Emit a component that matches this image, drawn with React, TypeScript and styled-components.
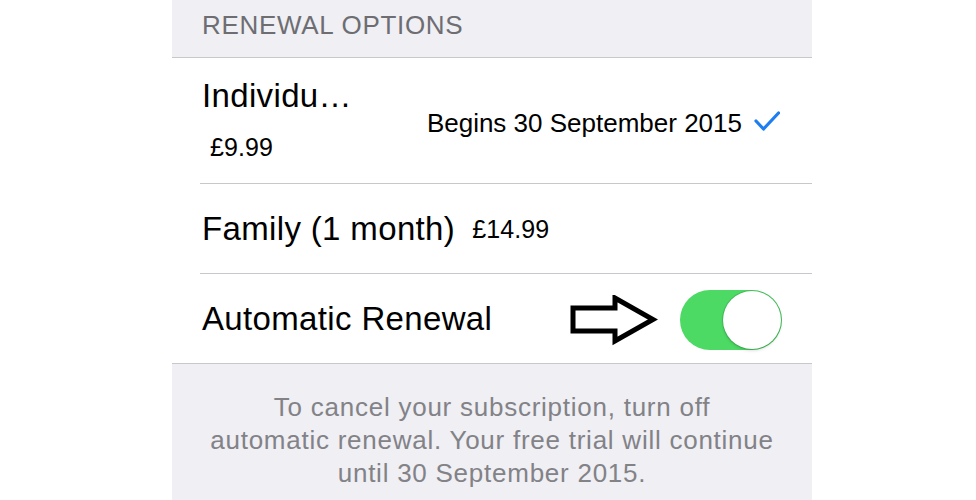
import styled, { createGlobalStyle } from 'styled-components'

const GlobalStyle = createGlobalStyle`
  html, body {
    margin: 0;
    padding: 0;
    background: #ffffff;
  }
  body {
    font-family: 'Liberation Sans', Arial, sans-serif;
    -webkit-font-smoothing: antialiased;
  }
`

const Page = styled.main`
  width: 976px;
  height: 500px;
  overflow: hidden;
  background: #ffffff;
  padding-left: 172px;
  box-sizing: border-box;
`

const Panel = styled.section`
  width: 640px;
  display: flex;
  flex-direction: column;
  background: #ffffff;
`

const Header = styled.div`
  background: #efeff4;
  border-bottom: 1px solid #c8c7cc;
  padding: 10px 0 0 30px;
  height: 47px;
  font-size: 26px;
  line-height: 30px;
  color: #6d6d72;
  letter-spacing: 0.7px;
`

const Row = styled.div<{ $height: number; $last?: boolean }>`
  margin-left: 28px;
  padding: 0 30px 0 2px;
  height: ${(p) => p.$height}px;
  display: flex;
  align-items: center;
  border-bottom: ${(p) => (p.$last ? 'none' : '1px solid #c8c7cc')};
  color: #000000;
`

const Stack = styled.div`
  display: flex;
  flex-direction: column;
  align-self: flex-start;
  padding-top: 19px;
`

const Label = styled.span`
  font-size: 33px;
  line-height: 38px;
  letter-spacing: 0.35px;
  white-space: nowrap;
`

const Price = styled.span<{ $gap?: number }>`
  font-size: 25px;
  line-height: 30px;
  letter-spacing: 0.1px;
  margin-left: ${(p) => p.$gap ?? 0}px;
`

const SubPrice = styled(Price)`
  margin-top: 17px;
  padding-left: 8px;
`

const Spacer = styled.div`
  flex: 1;
`

const Detail = styled.span`
  font-size: 26px;
  line-height: 30px;
  margin-top: 4px;
  white-space: nowrap;
`

const Check = styled.svg`
  margin-left: 12px;
  margin-right: 2px;
  margin-top: 2px;
`

const Arrow = styled.svg`
  margin-right: 22px;
  margin-top: 4px;
`

const Toggle = styled.div<{ $on: boolean }>`
  width: 102px;
  height: 60px;
  border-radius: 30px;
  background: ${(p) => (p.$on ? '#4cd964' : '#e5e5ea')};
  position: relative;
  flex-shrink: 0;
  margin-top: 2px;
`

const Knob = styled.div<{ $on: boolean }>`
  position: absolute;
  top: 1px;
  left: ${(p) => (p.$on ? '43px' : '1px')};
  width: 58px;
  height: 58px;
  border-radius: 50%;
  background: #ffffff;
  box-shadow: 0 0 0 1px rgba(0, 0, 0, 0.12), 0 2px 3px rgba(0, 0, 0, 0.12);
`

const Footer = styled.div`
  height: 137px;
  background: #efeff4;
  border-top: 1px solid #c8c7cc;
  display: flex;
  justify-content: center;
  padding-top: 27px;
  box-sizing: border-box;
`

const Note = styled.p`
  margin: 0;
  text-align: center;
  font-size: 26px;
  line-height: 33px;
  letter-spacing: 0.75px;
  color: #828287;
  white-space: nowrap;
`

const App = () => {
  return (
    <>
      <GlobalStyle />
      <Page>
        <Panel>
          <Header>RENEWAL OPTIONS</Header>

          <Row $height={125}>
            <Stack>
              <Label>Individu…</Label>
              <SubPrice>£9.99</SubPrice>
            </Stack>
            <Spacer />
            <Detail>Begins 30 September 2015</Detail>
            <Check width='26' height='21' viewBox='0 0 26 21'>
              <path
                d='M2 10 L9.5 18 L24.5 2'
                fill='none'
                stroke='#1c7ef0'
                strokeWidth='3.2'
                strokeLinecap='round'
                strokeLinejoin='round'
              />
            </Check>
          </Row>

          <Row $height={89}>
            <Label>Family (1 month)</Label>
            <Price $gap={17}>£14.99</Price>
          </Row>

          <Row $height={89} $last>
            <Label>Automatic Renewal</Label>
            <Spacer />
            <Arrow width='88' height='52' viewBox='0 0 88 52'>
              <path
                d='M3 13 L45 13 L45 3 L83 24.5 L45 46 L45 36 L3 36 Z'
                fill='none'
                stroke='#000000'
                strokeWidth='5'
                strokeLinejoin='miter'
              />
            </Arrow>
            <Toggle $on>
              <Knob $on />
            </Toggle>
          </Row>

          <Footer>
            <Note>
              To cancel your subscription, turn off
              <br />
              automatic renewal. Your free trial will continue
              <br />
              until 30 September 2015.
            </Note>
          </Footer>
        </Panel>
      </Page>
    </>
  )
}

export default App
